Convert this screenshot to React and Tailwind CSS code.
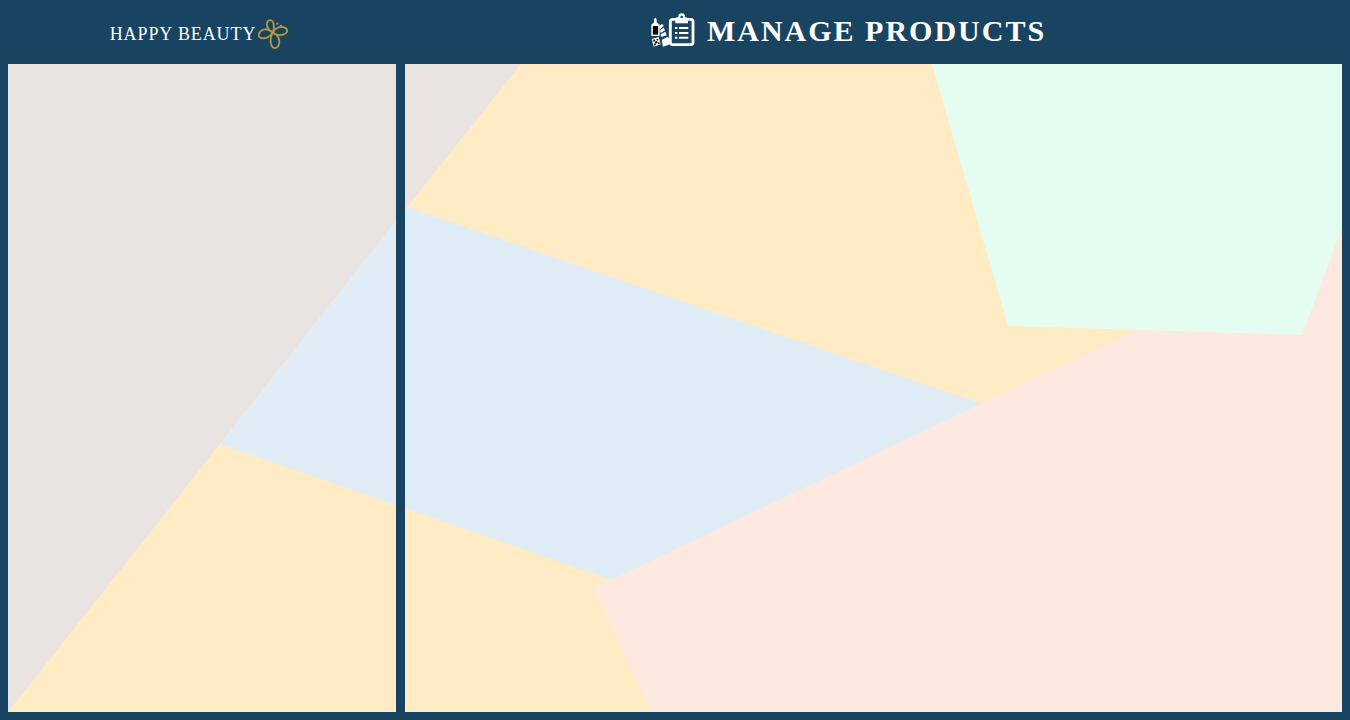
function ButterflyLogo() {
  return (
    <svg viewBox="6 6 90 90" className="size-[30px]" fill="none" stroke="#bd983b" strokeWidth="5.2" strokeLinecap="round" strokeLinejoin="round" aria-hidden="true">
      <path d="M50 47C36 38 30 26 34 15C37 7 48 7 52 17C55 27 54 38 50 47Z" />
      <path d="M50 47C38 34 20 34 12 45C4 55 8 64 20 64C33 64 43 58 50 47Z" />
      <path d="M50 47C56 33 72 27 84 31C97 35 96 46 86 51C75 56 61 55 50 47Z" />
      <path d="M50 47C63 51 71 64 70 77C68 97 50 97 46 84C42 72 44 59 50 47Z" />
      <circle cx="64" cy="20" r="3.4" fill="#bd983b" stroke="none" />
      <circle cx="75" cy="27" r="3.4" fill="#bd983b" stroke="none" />
    </svg>
  );
}

function ProductsIcon() {
  return (
    <svg viewBox="9 9 132 102" className="h-[34px] w-[44px]" fill="#ffffff" aria-hidden="true">
      <path d="M18 28L22 23L26 28V37L35 44V78H10V44L18 37Z" />
      <rect x="14.500" y="48" width="16" height="26" fill="#05080b" />
      <path d="M32 50L42 41L47 47L37 58Z" />
      <path d="M36 61L47 53L51 61L38 69Z" />
      <path d="M38 73L52 65L56 76L40 81Z" />
      <path d="M41 90L59 80L66 86V103L45 110Z" />
      <path d="M11 87L32 81L38 103L17 110Z" />
      <path d="M15 90L20 88L22 93L17 95ZM25 87L30 86L31 91L27 92ZM20 95L27 93L29 99L22 101ZM17 102L21 100L24 105L19 107ZM29 98L34 96L35 102L31 103Z" fill="#05080b" />
      <rect x="67" y="28" width="68" height="76" rx="7" fill="none" stroke="#ffffff" strokeWidth="8.500" />
      <path fillRule="evenodd" d="M82 40V27Q82 22 88 22H91Q90 10 101 10Q112 10 111 22H114Q120 22 120 27V40ZM101 17A4 4 0 1 0 101 25A4 4 0 1 0 101 17Z" />
      <path d="M81 51H88V57H81ZM81 66H88V72H81ZM81 80H88V86H81ZM93 51H121V57H93ZM93 66H121V72H93ZM93 80H121V86H93Z" />
    </svg>
  );
}

function Backdrop() {
  return (
    <svg viewBox="8 64 1334 648" preserveAspectRatio="none" className="absolute inset-0 size-full" aria-hidden="true">
      <rect x="8" y="64" width="1334" height="648" fill="#ffebc4" />
      <polygon points="8,64 521,64 407,207 220,444 8,712" fill="#e9e4e1" />
      <polygon points="407,207 982,404 612,580 220,444" fill="#e1edf6" />
      <polygon points="594,588 1342,232 1342,712 651,712" fill="#fde9e0" />
      <polygon points="932,64 1342,64 1342,227 1302,335 1008,326" fill="#e5fdf0" />
    </svg>
  );
}

export default function App() {
  return (
    <div className="flex min-h-screen flex-col bg-[#184461] px-2 pb-2 font-['Liberation_Serif',serif] text-white">
      <header className="grid h-16 grid-cols-[388fr_9px_937fr]">
        <a href="#home" className="flex items-center justify-center gap-0.5 pt-1 pr-1.5">
          <span className="text-lg leading-6 tracking-wider whitespace-nowrap">HAPPY BEAUTY</span>
          <ButterflyLogo />
        </a>
        <div className="col-start-3 flex items-center justify-center gap-3 pr-[50px] pb-1">
          <ProductsIcon />
          <h1 className="pt-0.5 text-3xl leading-8 font-bold tracking-[2px] whitespace-nowrap">MANAGE PRODUCTS</h1>
        </div>
      </header>
      <main className="relative grid flex-1 grid-cols-[388fr_9px_937fr]">
        <Backdrop />
        <div className="relative col-start-2 bg-[#184461]" />
      </main>
    </div>
  );
}
